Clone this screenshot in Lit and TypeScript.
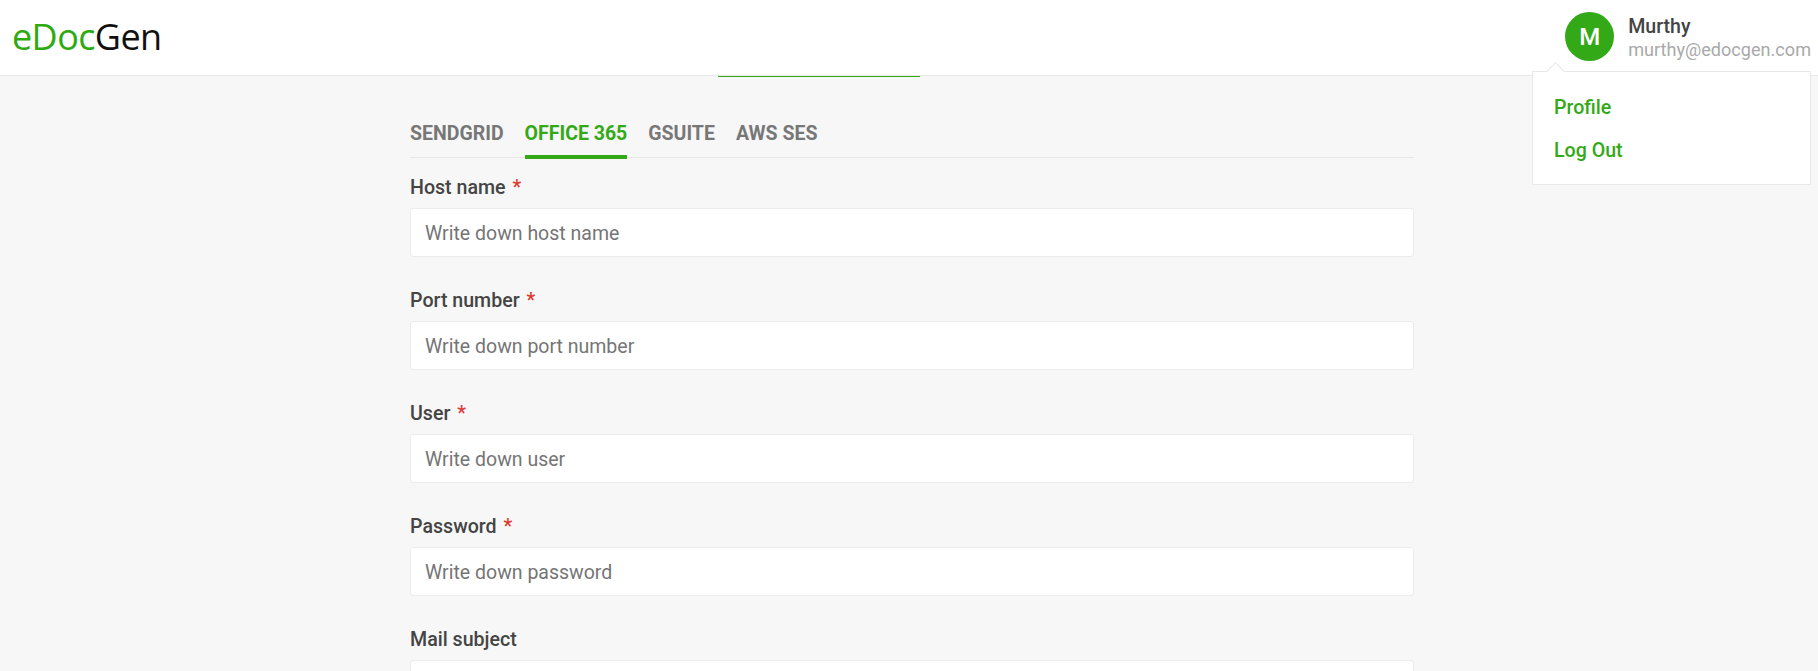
import { LitElement, css, html } from "lit";
import { customElement } from "lit/decorators.js";

const FIELDS = [
  { label: "Host name", placeholder: "Write down host name", required: true },
  { label: "Port number", placeholder: "Write down port number", required: true },
  { label: "User", placeholder: "Write down user", required: true },
  { label: "Password", placeholder: "Write down password", required: true },
  { label: "Mail subject", placeholder: "", required: false },
];

const TABS = ["SENDGRID", "OFFICE 365", "GSUITE", "AWS SES"];

@customElement("app-root")
export class AppRoot extends LitElement {
  static styles = css`
    :host {
      display: block;
      height: 671px;
      overflow: hidden;
      position: relative;
      background: #f7f7f7;
      font-family: Roboto, sans-serif;
      color: #444;
    }

    .header {
      height: 75px;
      display: flex;
      align-items: center;
      justify-content: space-between;
      background: #fff;
      border-bottom: 1px solid #e8e8e8;
      padding: 0 7px 0 12px;
      position: relative;
    }

    .logo {
      font-family: "Open Sans", sans-serif;
      font-size: 36px;
      line-height: 1;
      letter-spacing: -0.6px;
      color: #111;
      padding-bottom: 2px;
    }

    .logo span {
      color: #2eaa10;
    }

    .progress {
      position: absolute;
      left: 718px;
      top: 76px;
      width: 202px;
      height: 1px;
      background: #34ab14;
    }

    .user {
      display: flex;
      align-items: center;
      gap: 14px;
    }

    .avatar {
      width: 49px;
      height: 49px;
      margin-bottom: 2px;
      border-radius: 50%;
      background: #34a917;
      color: #fff;
      display: flex;
      align-items: center;
      justify-content: center;
      font-size: 24px;
      font-weight: 500;
    }

    .user-name {
      font-size: 19.6px;
      font-weight: 500;
      line-height: 23px;
    }

    .user-mail {
      font-size: 18.1px;
      line-height: 23px;
      color: #a9a9a9;
    }

    .menu {
      position: absolute;
      left: 1532px;
      top: 71px;
      width: 279px;
      height: 114px;
      box-sizing: border-box;
      background: #fff;
      border: 1px solid #e8e8e8;
      padding: 14px 21px;
      display: flex;
      flex-direction: column;
      z-index: 2;
    }

    .menu::before {
      content: "";
      position: absolute;
      left: 16px;
      top: -7px;
      width: 12px;
      height: 12px;
      background: #fff;
      border-left: 1px solid #e8e8e8;
      border-top: 1px solid #e8e8e8;
      transform: rotate(45deg);
    }

    .menu a {
      font-size: 19.6px;
      font-weight: 500;
      line-height: 43px;
      color: #34a917;
    }

    .content {
      width: 1004px;
      margin: 0 0 0 410px;
      padding-top: 46px;
    }

    .tabs {
      display: flex;
      gap: 21px;
      border-bottom: 1px solid #e8e8e8;
      height: 35px;
    }

    .tab {
      font-size: 19.5px;
      font-weight: 700;
      line-height: 21px;
      color: #777;
      height: 35px;
      padding-top: 1px;
      box-sizing: border-box;
    }

    .tab.active {
      color: #34a917;
      border-bottom: 4px solid #34a917;
      height: 37px;
    }

    .fields {
      padding-top: 18px;
    }

    .field {
      margin-bottom: 32px;
    }

    label {
      display: block;
      font-size: 19.6px;
      font-weight: 500;
      line-height: 21px;
      padding-top: 1px;
      margin-bottom: 10px;
    }

    .req {
      color: #dc3a32;
      margin-left: 2px;
    }

    .input {
      height: 49px;
      box-sizing: border-box;
      background: #fff;
      border: 1px solid #ececec;
      border-radius: 3px;
      padding: 2px 14px 0;
      display: flex;
      align-items: center;
      font-size: 19.5px;
      color: #757575;
    }
  `;

  render() {
    return html`
      <div class="header">
        <div class="logo"><span>eDoc</span>Gen</div>
        <div class="user">
          <div class="avatar">M</div>
          <div>
            <div class="user-name">Murthy</div>
            <div class="user-mail">murthy@edocgen.com</div>
          </div>
        </div>
        <div class="progress"></div>
      </div>
      <div class="menu">
        <a>Profile</a>
        <a>Log Out</a>
      </div>
      <div class="content">
        <div class="tabs">
          ${TABS.map((t, i) => html`<div class="tab ${i === 1 ? "active" : ""}">${t}</div>`)}
        </div>
        <div class="fields">
          ${FIELDS.map(
            (f) => html`
              <div class="field">
                <label>${f.label} ${f.required ? html`<span class="req">*</span>` : null}</label>
                <div class="input">${f.placeholder}</div>
              </div>
            `,
          )}
        </div>
      </div>
    `;
  }
}
